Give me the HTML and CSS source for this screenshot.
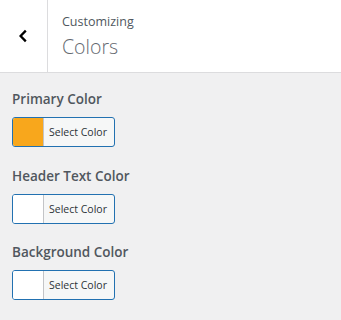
FILE: index.html
```html
<!DOCTYPE html>
<html>
<head>
<meta charset="utf-8">
<link rel="stylesheet" href="styles.css">
</head>
<body>
<div class="panel">
  <header class="head">
    <button class="back" aria-label="Back">
      <svg width="10" height="14" viewBox="0 0 10 14"><path d="M7.8 1.6 L2.6 7 L7.8 12.4" fill="none" stroke="#000" stroke-width="2.3" stroke-linejoin="miter"/></svg>
    </button>
    <div class="titles">
      <div class="crumb">Customizing</div>
      <div class="title">Colors</div>
    </div>
  </header>
  <main class="controls">
    <div class="control">
      <div class="label">Primary Color</div>
      <button class="picker"><span class="swatch" style="background:#f8a71c"></span><span class="txt">Select Color</span></button>
    </div>
    <div class="control">
      <div class="label">Header Text Color</div>
      <button class="picker"><span class="swatch" style="background:#ffffff"></span><span class="txt">Select Color</span></button>
    </div>
    <div class="control">
      <div class="label">Background Color</div>
      <button class="picker"><span class="swatch" style="background:#ffffff"></span><span class="txt">Select Color</span></button>
    </div>
  </main>
</div>
</body>
</html>
```
FILE: styles.css
```css
html, body { margin: 0; padding: 0; }
body {
  background: #f0f0f1;
  font-family: "Open Sans", "Noto Sans", sans-serif;
  color: #50575e;
  width: 341px;
  height: 320px;
  overflow: hidden;
}
.head {
  display: flex;
  height: 72px;
  background: #fff;
  border-bottom: 1px solid #dcdcde;
}
.back {
  width: 48px;
  height: 72px;
  border: 0;
  border-right: 1px solid #dcdcde;
  background: #fff;
  padding: 0 2px 0 0;
  display: flex;
  align-items: center;
  justify-content: center;
  box-sizing: border-box;
}
.titles {
  padding: 12px 0 0 14px;
  display: flex;
  flex-direction: column;
}
.crumb {
  font-size: 12.5px;
  line-height: 20px;
  color: #50575e;
}
.title {
  font-size: 19.5px;
  line-height: 30px;
  color: #646970;
  font-weight: 300;
}
.controls {
  padding: 16px 12px 0 12px;
  display: flex;
  flex-direction: column;
  gap: 18.5px;
}
.control { display: flex; flex-direction: column; gap: 8px; }
.label {
  font-size: 13.5px;
  font-weight: 600;
  line-height: 20px;
  color: #50575e;
}
.picker {
  display: flex;
  width: 103px;
  height: 30px;
  padding: 0;
  border: 1px solid #2271b1;
  border-radius: 3px;
  overflow: hidden;
  background: #f6f7f7;
  box-sizing: border-box;
  font-family: inherit;
}
.swatch {
  width: 30px;
  height: 100%;
  border-right: 1px solid #c3c4c7;
}
.txt {
  flex: 1;
  font-size: 10.5px;
  line-height: 28px;
  color: #2c3338;
  text-align: center;
  padding-right: 2px;
}
```
